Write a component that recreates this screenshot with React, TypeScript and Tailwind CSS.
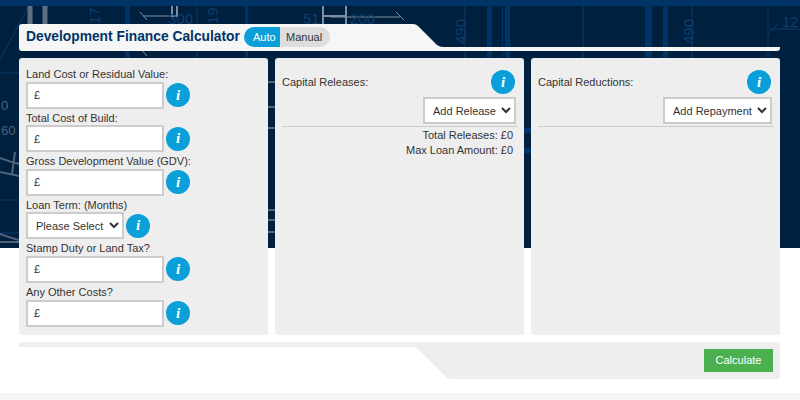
const fields = [
  { label: "Land Cost or Residual Value:" },
  { label: "Total Cost of Build:" },
  { label: "Gross Development Value (GDV):" },
  { label: "Loan Term: (Months)", select: true },
  { label: "Stamp Duty or Land Tax?" },
  { label: "Any Other Costs?" },
];

const InfoIcon = () => (
  <span className="flex h-6 w-6 shrink-0 items-center justify-center rounded-full bg-[#0a9fd9] font-['Liberation_Serif',serif] text-[15px] font-bold italic leading-none text-white">
    i
  </span>
);

// blueprint drawing behind the form
const Blueprint = () => (
  <svg className="absolute left-0 top-0" width="800" height="248" viewBox="0 0 800 248" fill="none">
    <rect width="800" height="248" fill="#002040" />
    <rect width="800" height="6" fill="#003366" />
    <g fill="#003366">
      <rect x="487" y="6" width="5" height="242" />
      <rect x="502" y="6" width="1" height="242" />
      <rect x="505" y="6" width="5" height="242" />
      <rect x="645" y="6" width="7" height="242" />
      <rect x="663" y="6" width="5" height="242" />
      <rect x="125" y="6" width="5" height="52" />
      <rect x="245" y="6" width="3" height="52" />
      <rect x="524" y="128" width="7" height="5" />
      <rect x="524" y="148" width="7" height="5" />
    </g>
    <g stroke="#0c3a66" strokeWidth="1">
      <path d="M465 6V248M583 6V248M692 6V248M768 6V248M197 6V58" />
      <path d="M770 29H800M768 34L780 22" />
      <path d="M0 60L29 6" />
      <path d="M0 73H19M0 200H19M0 233H19" />
    </g>
    <g stroke="#7f8fa1" strokeWidth="1">
      <path d="M143 16H172M140 12L147 20M396 12L404 20M330 17H400M140 48L147 56" />
    </g>
    <g stroke="#5d6f84" strokeWidth="5">
      <path d="M30 6V24M45 6V24" />
    </g>
    <g stroke="#7f8fa1" strokeWidth="2">
      <path d="M172 6V16H177V6" />
      <path d="M323 6V24M346 6V24M323 16H346" />
    </g>
    <g stroke="#4f6279" strokeWidth="2">
      <path d="M0 158Q10 162 19 164M0 172Q10 174 19 176M15 152L12 174" />
      <path d="M0 234Q10 238 19 240M0 242H19" />
      <path d="M268 82H275M268 107H275M268 128H275M268 210H275M268 220H275M268 232H275" />
    </g>
    <g fill="#0c3f70" fontFamily="'Liberation Sans', sans-serif" fontSize="15">
      <text transform="translate(466 44) rotate(-90)">490</text>
      <text transform="translate(694 44) rotate(-90)">490</text>
      <text transform="translate(100 24) rotate(-90)">17</text>
      <text transform="translate(218 24) rotate(-90)">19</text>
      <text x="782" y="27">12</text>
      <text x="168" y="24">300</text>
      <text x="303" y="24">51</text>
      <text x="350" y="24">200</text>
    </g>
    <g fill="#4f6279" fontFamily="'Liberation Sans', sans-serif" fontSize="13">
      <text x="1" y="110">0</text>
      <text x="1" y="135">60</text>
    </g>
  </svg>
);

const Field = ({ label, select }: { label: string; select?: boolean }) => (
  <div>
    <div className="h-[16.6px] whitespace-nowrap text-[11px] leading-[18px]">{label}</div>
    <div className="flex items-center gap-[2px]">
      {select ? (
        <select className="h-[27px] w-[98px] border-2 border-[#ccc] bg-white pl-[4px] text-[11px] outline-none">
          <option>Please Select</option>
        </select>
      ) : (
        <input
          defaultValue="£"
          className="h-[27px] w-[138px] border-2 border-[#ccc] bg-white px-[6px] text-[11px] outline-none"
        />
      )}
      <InfoIcon />
    </div>
  </div>
);

const SidePanel = ({
  title,
  option,
  selectWidth,
  children,
}: {
  title: string;
  option: string;
  selectWidth: string;
  children?: React.ReactNode;
}) => (
  <div className="rounded-[3px] bg-[#eee] px-[7px] pt-[12px] text-[11px]">
    <div className="flex h-6 items-center justify-between pr-[2px]">
      <span>{title}</span>
      <InfoIcon />
    </div>
    <div className="mt-[3px] flex justify-end pr-[1px]">
      <select className={`h-[27px] ${selectWidth} border-2 border-[#ccc] bg-white pl-[4px] text-[11px] outline-none`}>
        <option>{option}</option>
      </select>
    </div>
    <div className="mt-[2px] border-t-[1px] border-[#ccc]" />
    {children}
  </div>
);

export default function App() {
  return (
    <div className="relative h-[400px] w-[800px] overflow-hidden bg-white font-['Liberation_Sans',sans-serif] text-[#333]">
      <Blueprint />

      <div className="relative ml-[19px] w-[761px] pt-[24px]">
        {/* Title tab */}
        <div className="relative h-[27px]">
          <svg className="absolute left-0 top-0" width="761" height="27" viewBox="0 0 761 27" fill="none">
            <path
              d="M3 0H394Q397 0 399 2L418 21Q421 23 424 23H761V24Q761 27 758 27H3Q0 27 0 24V3Q0 0 3 0Z"
              fill="#f6f6f6"
            />
          </svg>
          <div className="relative flex h-full items-center pb-[1px] pl-[7px]">
            <h1 className="w-[214px] whitespace-nowrap text-[13.8px] font-bold leading-none text-[#003366]">
              Development Finance Calculator
            </h1>
            <div className="ml-[4px] flex h-[20px] text-[11px] leading-[20px]">
              <span className="w-[36px] rounded-l-full bg-[#0a9fd9] pl-[9px] text-white">Auto</span>
              <span className="w-[50px] rounded-r-full bg-[#ddd] pl-[6px]">Manual</span>
            </div>
          </div>
        </div>

        {/* Panels */}
        <div className="mt-[7px] grid h-[277px] grid-cols-[249px_249px_249px] gap-[7px]">
          <div className="rounded-[3px] bg-[#eee] px-[7px] pt-[7px]">
            {fields.map((f) => (
              <Field key={f.label} label={f.label} select={f.select} />
            ))}
          </div>
          <SidePanel title="Capital Releases:" option="Add Release" selectWidth="w-[93px]">
            <div className="pr-[4px] pt-[1px] text-right leading-[15px]">
              <div>Total Releases: £0</div>
              <div>Max Loan Amount: £0</div>
            </div>
          </SidePanel>
          <SidePanel title="Capital Reductions:" option="Add Repayment" selectWidth="w-[109px]" />
        </div>

        {/* Action bar */}
        <div className="relative mt-[7px] flex h-[37px] justify-end rounded-[4px] bg-[#eee] pr-[7px] pt-[7px]">
          <svg className="absolute left-0 top-[5px]" width="430" height="32" viewBox="0 0 430 32" fill="none">
            <path d="M0 0H394Q397 0 399 2L426 29Q428 32 431 32H0Z" fill="#fff" />
          </svg>
          <button className="relative h-[23px] w-[69px] bg-[#4caf50] text-[11px] text-white">Calculate</button>
        </div>
      </div>

      <div className="relative mt-[14px] h-[7px] bg-[#f5f5f5]" />
    </div>
  );
}
